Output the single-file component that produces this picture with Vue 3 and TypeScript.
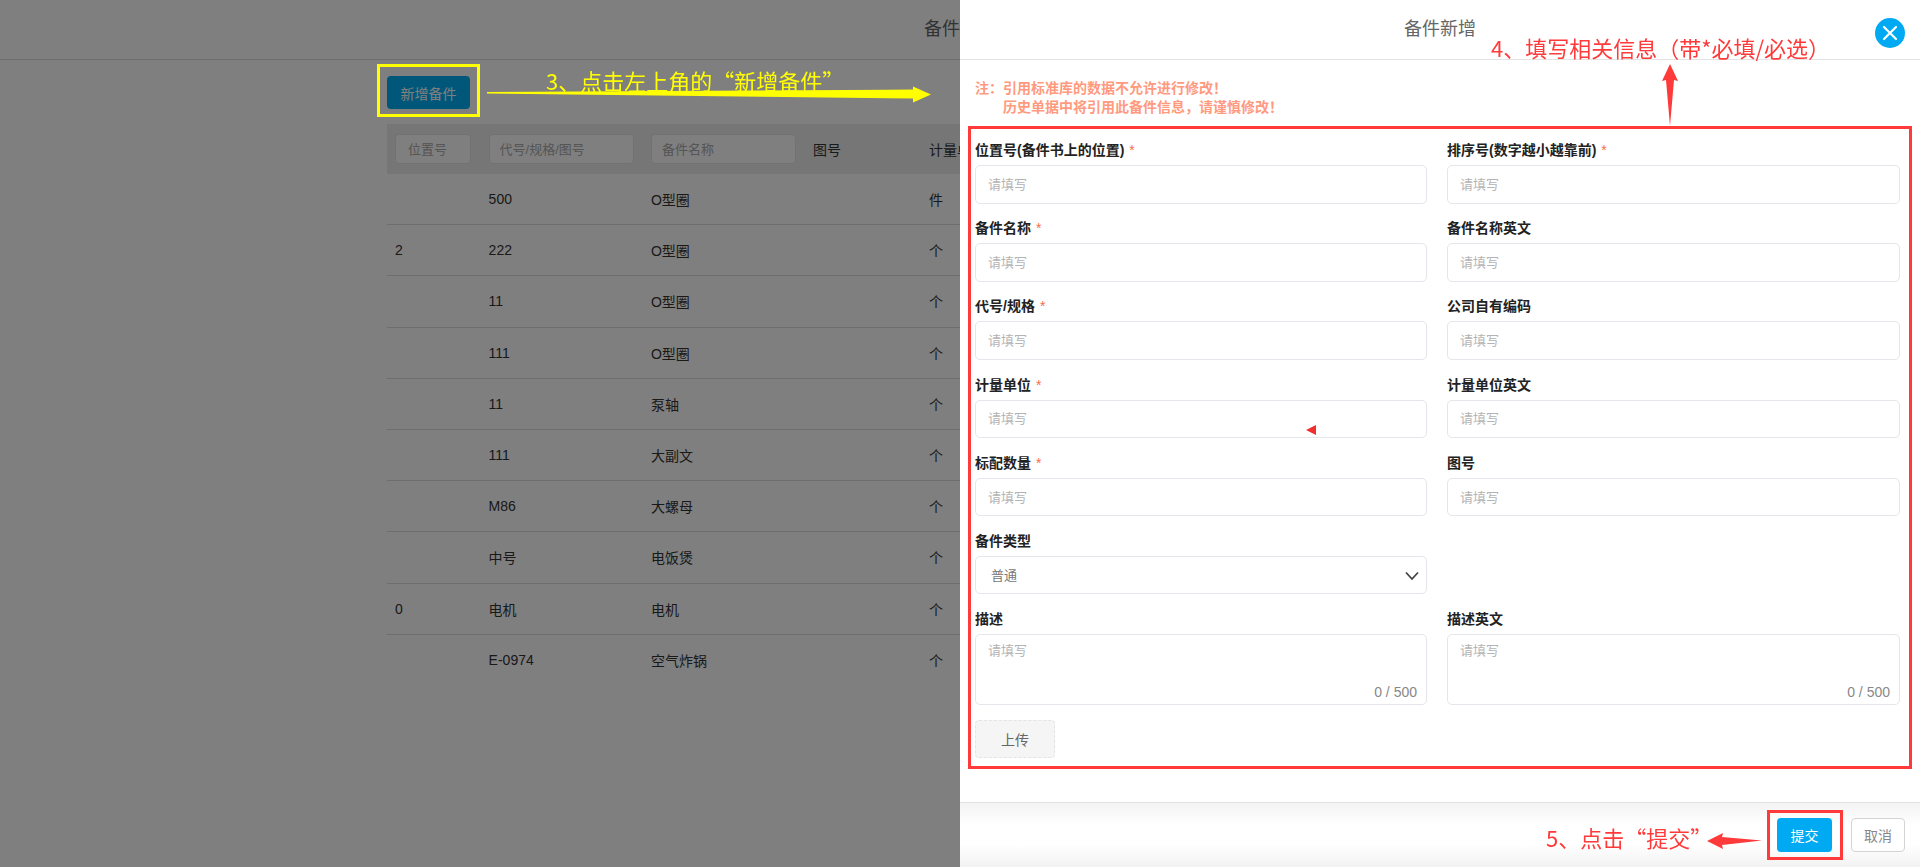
<template>
  <div class="page">
    <header class="page-head">备件管理</header>
    <div class="toolbar">
      <button type="button" class="btn add">新增备件</button>
    </div>
    <div class="table">
      <div class="row head">
        <div class="cell"><input class="filter" type="text" placeholder="位置号" /></div>
        <div class="cell"><input class="filter" type="text" placeholder="代号/规格/图号" /></div>
        <div class="cell"><input class="filter" type="text" placeholder="备件名称" /></div>
        <div class="cell">图号</div>
        <div class="cell">计量单位</div>
      </div>
      <div v-for="(r, i) in rows" :key="i" class="row">
        <div class="cell">{{ r.pos }}</div>
        <div class="cell">{{ r.code }}</div>
        <div class="cell">{{ r.name }}</div>
        <div class="cell"></div>
        <div class="cell">{{ r.unit }}</div>
      </div>
    </div>

    <div class="backdrop"></div>

    <aside class="panel">
      <div class="panel-head">
        <span>备件新增</span>
        <button type="button" class="close" aria-label="关闭">
          <svg width="16" height="16" viewBox="0 0 16 16">
            <path d="M2 2 14 14M14 2 2 14" stroke="#fff" stroke-width="2.2" fill="none" stroke-linecap="round" />
          </svg>
        </button>
      </div>
      <div class="panel-body">
        <p class="note">
          注：引用标准库的数据不允许进行修改！<br />
          <span class="note-indent">历史单据中将引用此备件信息，请谨慎修改！</span>
        </p>
        <form class="form" @submit.prevent>
          <label v-for="f in fields" :key="f.label" class="field">
            <span class="label"><span>{{ f.label }}</span><em v-if="f.required">*</em></span>
            <input type="text" placeholder="请填写" />
          </label>
          <label class="field">
            <span class="label">备件类型</span>
            <span class="select-wrap">
              <select>
                <option>普通</option>
              </select>
              <svg class="chevron" width="16" height="10" viewBox="0 0 16 10">
                <path d="M2 1.5 8 8l6-6.500" stroke="#444" stroke-width="1.8" fill="none" />
              </svg>
            </span>
          </label>
          <div></div>
          <label v-for="t in areas" :key="t" class="field">
            <span class="label">{{ t }}</span>
            <span class="area-wrap">
              <textarea placeholder="请填写"></textarea>
              <span class="count">0 / 500</span>
            </span>
          </label>
          <div class="upload-row">
            <button type="button" class="upload">上传</button>
          </div>
        </form>
      </div>
      <div class="panel-foot">
        <button type="button" class="btn submit">提交</button>
        <button type="button" class="btn cancel">取消</button>
      </div>
    </aside>

    <!-- tutorial marks drawn over the screenshot -->
    <div class="mark yellow-box"></div>
    <div class="mark step step3">3、点击左上角的“新增备件”</div>
    <svg class="mark arrow3" width="444" height="18" viewBox="0 0 444 18">
      <path d="M0 6 426 3.500 426 0.500 444 8.500 426 16.500 426 12.500 0 7.500Z" fill="#ffff00" />
    </svg>
    <div class="mark red-form"></div>
    <div class="mark step step4">4、填写相关信息（带*必填/必选）</div>
    <svg class="mark arrow4" width="18" height="62" viewBox="0 0 18 62">
      <path d="M9 0 17 17 13 16 9 62 5 16 1 17Z" fill="#ff3a3a" />
    </svg>
    <div class="mark red-submit"></div>
    <div class="mark step step5">5、点击“提交”</div>
    <svg class="mark arrow5" width="55" height="18" viewBox="0 0 55 18">
      <path d="M0 9 16 1 15 5 55 8.500 15 13 16 17Z" fill="#ff3a3a" />
    </svg>
    <svg class="mark cursor" width="11" height="10" viewBox="0 0 11 10">
      <path d="M0 5 10 0 10 10Z" fill="#f03030" />
    </svg>
  </div>
</template>

<script setup lang="ts">
interface PartRow {
  pos: string;
  code: string;
  name: string;
  unit: string;
}

const rows: PartRow[] = [
  { pos: '', code: '500', name: 'O型圈', unit: '件' },
  { pos: '2', code: '222', name: 'O型圈', unit: '个' },
  { pos: '', code: '11', name: 'O型圈', unit: '个' },
  { pos: '', code: '111', name: 'O型圈', unit: '个' },
  { pos: '', code: '11', name: '泵轴', unit: '个' },
  { pos: '', code: '111', name: '大副文', unit: '个' },
  { pos: '', code: 'M86', name: '大螺母', unit: '个' },
  { pos: '', code: '中号', name: '电饭煲', unit: '个' },
  { pos: '0', code: '电机', name: '电机', unit: '个' },
  { pos: '', code: 'E-0974', name: '空气炸锅', unit: '个' },
];

const fields = [
  { label: '位置号(备件书上的位置)', required: true },
  { label: '排序号(数字越小越靠前)', required: true },
  { label: '备件名称', required: true },
  { label: '备件名称英文', required: false },
  { label: '代号/规格', required: true },
  { label: '公司自有编码', required: false },
  { label: '计量单位', required: true },
  { label: '计量单位英文', required: false },
  { label: '标配数量', required: true },
  { label: '图号', required: false },
];

const areas = ['描述', '描述英文'];
</script>

<style>
html,
body {
  margin: 0;
  background: #fff;
}
</style>

<style scoped>
.page {
  position: relative;
  height: 867px;
  overflow: hidden;
  font-family: "Liberation Sans", "Noto Sans CJK SC", sans-serif;
  font-size: 14px;
  color: #333;
}

.page-head {
  height: 59px;
  line-height: 58px;
  text-align: center;
  font-size: 18px;
  color: #666;
  border-bottom: 1px solid #ddd;
}

.toolbar {
  padding: 16px 387px 15px;
  display: flex;
}

.btn {
  font: inherit;
  font-size: 14px;
  border-radius: 4px;
  border: none;
  cursor: pointer;
}

.add {
  width: 83px;
  height: 33px;
  background: #00aef5;
  color: #fff;
}

.table {
  margin: 0 387px;
}

.row {
  display: grid;
  grid-template-columns: 93.6px 162.4px 162px 116px 1fr;
  height: 51.2px;
  box-sizing: border-box;
  align-items: center;
  border-bottom: 1px solid #ddd;
}

.row:last-child {
  border-bottom: none;
}

.row.head {
  height: 50px;
  background: #ececec;
  border-bottom: none;
}

.cell {
  padding-left: 8px;
  white-space: nowrap;
}

.filter {
  display: block;
  width: 100%;
  max-width: 145px;
  height: 30px;
  box-sizing: border-box;
  padding: 0 10px;
  font: inherit;
  font-size: 13px;
  background: #fff;
  border: 1px solid #e4e4e4;
  border-radius: 4px;
}

.cell:first-child .filter {
  width: 76px;
  padding: 0 12px;
}

.filter::placeholder {
  color: #aaa;
}

.backdrop {
  position: fixed;
  inset: 0;
  background: rgba(0, 0, 0, 0.5);
}

.panel {
  position: fixed;
  top: 0;
  right: 0;
  bottom: 0;
  width: 960px;
  background: #fff;
  display: flex;
  flex-direction: column;
}

.panel-head {
  position: relative;
  height: 59px;
  line-height: 58px;
  flex: none;
  text-align: center;
  font-size: 18px;
  color: #666;
  border-bottom: 1px solid #e4e4e4;
}

.close {
  position: absolute;
  top: 18px;
  right: 15px;
  width: 30px;
  height: 30px;
  padding: 0;
  border: none;
  border-radius: 50%;
  background: #00aaf2;
  display: flex;
  align-items: center;
  justify-content: center;
}

.panel-body {
  flex: 1;
  padding: 18px 20px 0 15px;
  min-height: 0;
}

.note {
  margin: 0 0 25px;
  line-height: 18.5px;
  font-size: 14px;
  font-weight: 700;
  color: #ff9a7e;
  font-family: "Noto Sans CJK SC", sans-serif;
}

.note-indent {
  padding-left: 28px;
}

.form {
  display: grid;
  grid-template-columns: 452px 453px;
  column-gap: 20px;
  row-gap: 14.7px;
}

.field {
  display: flex;
  flex-direction: column;
  gap: 5px;
}

.label {
  line-height: 20px;
  font-weight: 600;
  color: #222;
}

.label em {
  margin-left: 5px;
  font-style: normal;
  font-weight: 400;
  color: #f56c4c;
}

input,
select,
textarea {
  box-sizing: border-box;
  border: 1px solid #e3e6ea;
  border-radius: 5px;
  font: inherit;
  font-size: 13px;
  outline: none;
  background: #fff;
}

.field input {
  height: 38.500px;
  padding: 0 12px;
}

input::placeholder,
textarea::placeholder {
  color: #b4b4b4;
}

.select-wrap {
  position: relative;
  display: block;
}

select {
  display: block;
  width: 100%;
  height: 38.500px;
  padding: 0 15px;
  appearance: none;
  color: #777;
}

.chevron {
  position: absolute;
  right: 7px;
  top: 15px;
}

.area-wrap {
  position: relative;
  display: block;
}

textarea {
  display: block;
  width: 100%;
  height: 71px;
  padding: 7px 12px;
  line-height: 18px;
  resize: none;
}

.count {
  position: absolute;
  right: 10px;
  bottom: 5px;
  font-size: 14px;
  color: #888;
}

.upload-row {
  grid-column: 1 / -1;
}

.upload {
  display: block;
  width: 80px;
  height: 38px;
  font: inherit;
  color: #666;
  background: #f5f5f5;
  border: 1px dashed #e4e4e4;
  border-radius: 4px;
}

.panel-foot {
  flex: none;
  height: 65px;
  box-sizing: border-box;
  padding-top: 15px;
  padding-right: 15px;
  display: flex;
  justify-content: flex-end;
  gap: 19px;
  border-top: 1px solid #e2e2e2;
  background: linear-gradient(#f4f4f4, #fff 35%, #fff 65%, #f2f2f2);
}

.submit {
  width: 55px;
  height: 34px;
  background: #00aaf2;
  color: #fff;
}

.cancel {
  width: 54px;
  height: 34px;
  background: #fff;
  color: #888;
  border: 1px solid #d4d4d4;
}

.mark {
  position: absolute;
}

.step {
  font-family: "Noto Sans CJK SC", sans-serif;
  font-size: 22px;
  line-height: 30px;
  white-space: pre;
}

.yellow-box {
  left: 377px;
  top: 64px;
  width: 103px;
  height: 53px;
  box-sizing: border-box;
  border: 3px solid #ffff00;
}

.step3 {
  left: 546px;
  top: 65px;
  color: #ffff00;
}

.arrow3 {
  left: 487px;
  top: 86px;
}

.red-form {
  left: 968px;
  top: 126px;
  width: 944px;
  height: 643px;
  box-sizing: border-box;
  border: 3px solid #ff3a3a;
}

.step4 {
  left: 1491px;
  top: 32px;
  color: #ff3a3a;
}

.arrow4 {
  left: 1661px;
  top: 64px;
}

.red-submit {
  left: 1767px;
  top: 810px;
  width: 76px;
  height: 50px;
  box-sizing: border-box;
  border: 3px solid #ff3a3a;
}

.step5 {
  left: 1546px;
  top: 822px;
  color: #ff3a3a;
}

.arrow5 {
  left: 1707px;
  top: 832px;
}

.cursor {
  left: 1306px;
  top: 425px;
}
</style>
